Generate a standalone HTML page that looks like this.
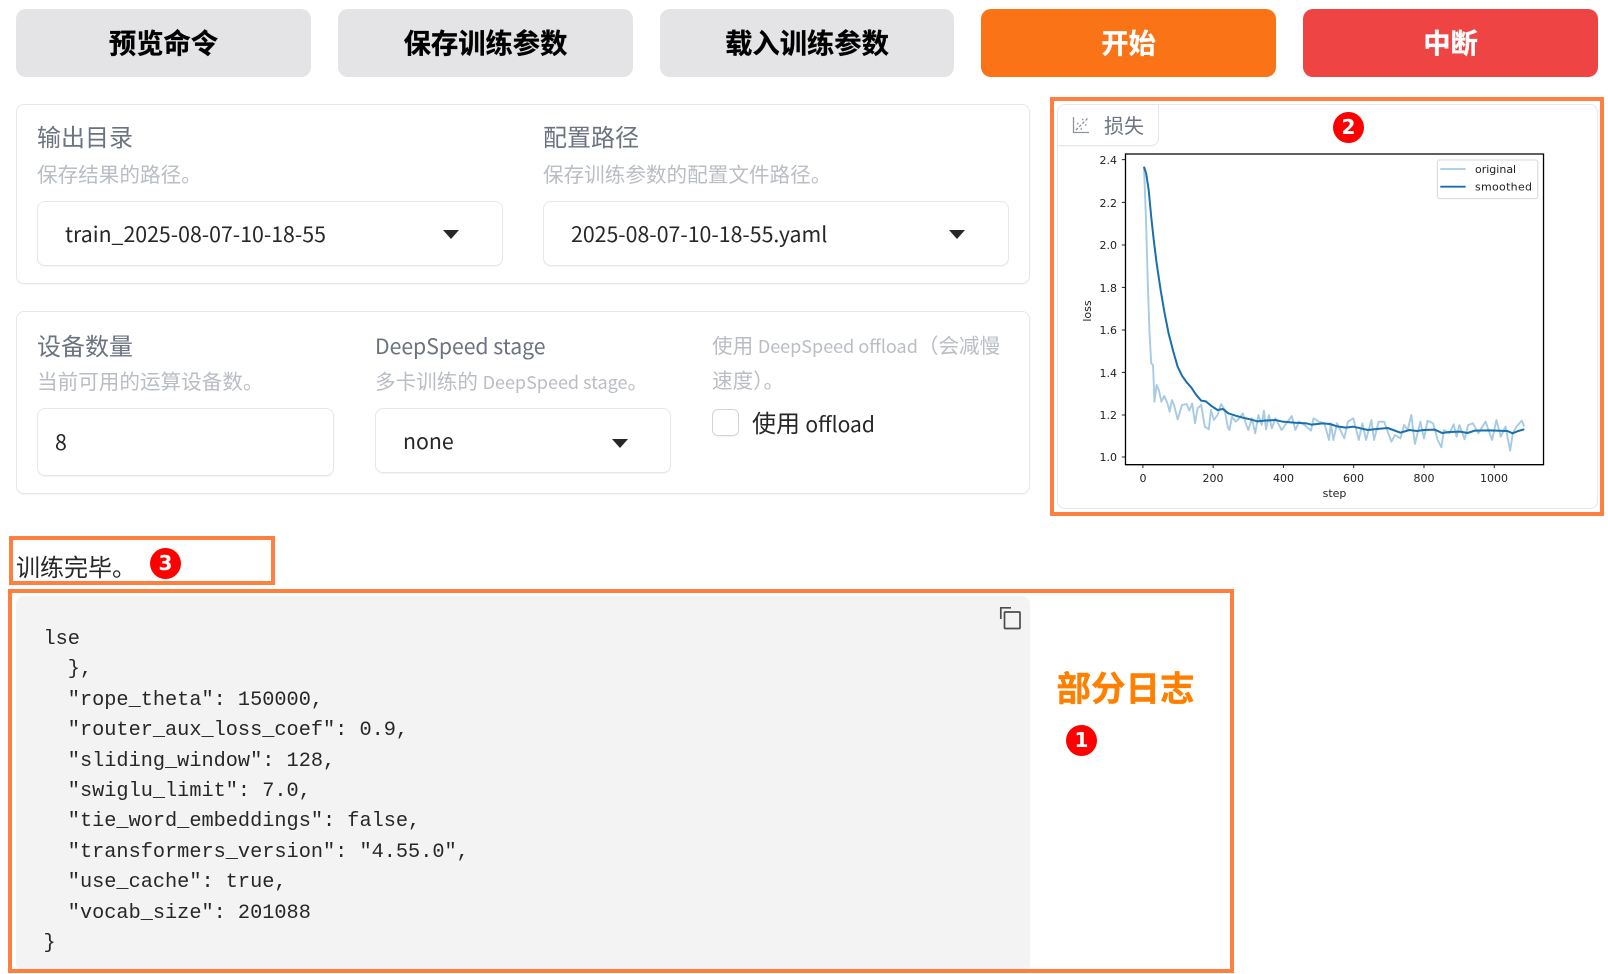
<!DOCTYPE html>
<html lang="zh"><head><meta charset="utf-8"><title>训练</title>
<style>
*{box-sizing:border-box}
html,body{margin:0;padding:0;background:#fff;width:1608px;height:974px;overflow:hidden}
body{position:relative;font-family:"Noto Sans CJK SC","Liberation Sans",sans-serif}
.a{position:absolute;white-space:nowrap}
.btn{position:absolute;top:9px;height:68px;width:295px;border-radius:10px;display:flex;align-items:center;justify-content:center;font-weight:700;font-size:27.3px;color:#000;background:#e4e4e7;padding-bottom:5px;-webkit-text-stroke:.3px currentColor}
.card{position:absolute;border:1px solid #e5e7eb;border-radius:8px;background:#fff;box-shadow:0 1px 1px rgba(0,0,0,.04)}
.box{position:absolute;border:1px solid #e5e7eb;border-radius:8px;background:#fff;box-shadow:0 1px 1px rgba(0,0,0,.05)}
.lab{font-size:24px;line-height:30px;color:#6b7280}
.sub{font-size:20.6px;line-height:28px;color:#b9bdc4}
.sub span{font-size:18px}
.val{font-size:21.3px;line-height:30px;color:#27272a}
.arr{position:absolute;width:0;height:0;border-left:8px solid transparent;border-right:8px solid transparent;border-top:9px solid #27272a}
.org{position:absolute;border:4px solid #ff7f41}
.badge{position:absolute;width:31px;height:31px;border-radius:50%;background:#f00;color:#fff;font:700 20px/31px "DejaVu Sans","Liberation Sans",sans-serif;text-align:center}
pre{position:absolute;left:43.5px;top:625px;margin:0;font:20.25px/30.4px "Liberation Mono",monospace;color:#27272a}
</style></head><body>

<div class="btn" style="left:16px">预览命令</div>
<div class="btn" style="left:338px">保存训练参数</div>
<div class="btn" style="left:660px;width:294px">载入训练参数</div>
<div class="btn" style="left:981px;background:#fb7317;color:#fff">开始</div>
<div class="btn" style="left:1303px;background:#ef4444;color:#fff">中断</div>

<div class="card" style="left:16px;top:104px;width:1014px;height:180px"></div>
<div class="a lab" style="left:37px;top:121px">输出目录</div>
<div class="a sub" style="left:37px;top:159px">保存结果的路径。</div>
<div class="box" style="left:37px;top:201px;width:466px;height:65px"></div>
<div class="a val" style="left:65px;top:219px">train_2025-08-07-10-18-55</div>
<div class="arr" style="left:443px;top:230px"></div>
<div class="a lab" style="left:543px;top:121px">配置路径</div>
<div class="a sub" style="left:543px;top:159px">保存训练参数的配置文件路径。</div>
<div class="box" style="left:543px;top:201px;width:466px;height:65px"></div>
<div class="a val" style="left:571px;top:219px">2025-08-07-10-18-55.yaml</div>
<div class="arr" style="left:949px;top:230px"></div>

<div class="card" style="left:16px;top:311px;width:1014px;height:183px"></div>
<div class="a lab" style="left:37px;top:329.5px">设备数量</div>
<div class="a sub" style="left:37px;top:366px">当前可用的运算设备数。</div>
<div class="box" style="left:37px;top:408px;width:297px;height:68px"></div>
<div class="a val" style="left:55px;top:427px">8</div>
<div class="a lab" style="left:375px;top:331px;font-size:21.2px">DeepSpeed stage</div>
<div class="a sub" style="left:375px;top:366px">多卡训练的 <span>DeepSpeed stage</span>。</div>
<div class="box" style="left:375px;top:408px;width:296px;height:65px"></div>
<div class="a val" style="left:403px;top:426px">none</div>
<div class="arr" style="left:612px;top:439px"></div>
<div class="a sub" style="left:712px;top:328px;line-height:32.500px">使用 <span>DeepSpeed offload</span>（会减慢<br>速度）。</div>
<div class="box" style="left:712px;top:409px;width:27px;height:27px;border-color:#d1d5db;border-radius:6px"></div>
<div class="a val" style="left:752px;top:407px;font-size:24px">使用 <span style="font-size:21px">offload</span></div>

<div class="box" style="left:1057px;top:104px;width:541px;height:405px;box-shadow:none"></div>
<div class="a" style="left:1057px;top:104px;width:102px;height:42px;border:1px solid #e5e7eb;border-width:0 1px 1px 0;border-radius:8px 0 8px 0;box-shadow:0 1px 1px rgba(0,0,0,.03)"></div>
<svg class="a" style="left:1072px;top:116px" width="18" height="18" viewBox="0 0 18 18" fill="none" stroke="#8f949c" stroke-width="1.300"><path d="M1.500 1v15.500H17"/><path d="M4 14L15.500 2.500" stroke-dasharray="2.800 1.700"/><path d="M5 7.500h1.500M10 3.500h1.500M8.500 13h1.500M13 9h1.500" stroke-width="1.500"/></svg>
<div class="a" style="left:1104px;top:110px;font-size:20px;line-height:30px;color:#6b7280">损失</div>

<svg class="a" style="left:1040px;top:90px;filter:blur(.3px)" width="568" height="440" viewBox="0 0 1568 1320" preserveAspectRatio="none">
<rect x="236" y="192" width="1154" height="932" fill="#fff" stroke="#000" stroke-width="1.300" vector-effect="non-scaling-stroke"/>
<path stroke="#222" stroke-width="1" vector-effect="non-scaling-stroke" d="M226 209H236M226 337H236M226 465H236M226 592H236M226 720H236M226 847H236M226 975H236M226 1101H236M284 1124V1134M478 1124V1134M672 1124V1134M866 1124V1134M1060 1124V1134M1254 1124V1134"/>
<polyline fill="none" stroke="#a6cbe3" stroke-width="1.900" vector-effect="non-scaling-stroke" stroke-linejoin="round" points="287,230 293,400 297,560 302,720 307,820 312,825 316,935 322,885 328,900 335,935 343,918 352,940 358,965 364,930 370,945 380,988 392,945 405,942 412,962 420,940 428,1000 435,955 445,945 455,1010 466,1018 472,960 480,990 490,975 500,942 510,960 518,1010 523,1020 530,980 540,995 550,985 560,970 568,1000 575,1020 585,985 594,1030 603,975 612,1005 618,962 624,1018 632,975 640,1015 650,985 667,1020 680,1000 695,978 705,1020 715,995 730,1005 748,1022 755,985 770,995 785,1000 798,1050 803,1000 810,1050 820,1000 840,1045 850,995 865,985 880,1050 890,1000 900,1050 915,990 922,1050 935,995 950,995 970,1055 980,1035 995,1045 1005,1005 1015,1020 1025,975 1035,1062 1050,995 1060,1045 1070,992 1085,1000 1098,1050 1108,1072 1115,1020 1130,1030 1142,1003 1150,1040 1158,1005 1172,1048 1182,1005 1195,1000 1210,1030 1230,995 1248,1050 1260,990 1272,1040 1285,1010 1298,1082 1305,1030 1315,1010 1330,992 1337,1010"/>
<polyline fill="none" stroke="#1a6fad" stroke-width="2" vector-effect="non-scaling-stroke" stroke-linejoin="round" points="287,230 293,250 300,300 307,380 314,450 322,520 333,600 344,670 355,730 368,785 380,830 392,857 405,877 418,893 430,913 445,932 458,934 472,947 490,960 505,957 520,970 540,977 560,983 580,988 600,994 620,992 650,990 670,995 700,998 735,1000 750,1004 780,1000 800,1002 820,1009 845,1013 865,1010 885,1015 905,1020 930,1017 960,1014 975,1020 995,1028 1020,1020 1040,1023 1060,1020 1090,1019 1110,1029 1130,1026 1160,1025 1180,1029 1200,1022 1240,1021 1260,1022 1290,1023 1305,1030 1320,1023 1337,1018"/>
<rect x="1097" y="210" width="277" height="116" rx="6" fill="#fff" fill-opacity=".8" stroke="#d8d8d8" stroke-width="1" vector-effect="non-scaling-stroke"/>
<path d="M1105 237H1175" stroke="#a6cbe3" stroke-width="1.700" vector-effect="non-scaling-stroke"/>
<path d="M1105 290H1175" stroke="#1a6fad" stroke-width="1.800" vector-effect="non-scaling-stroke"/>
</svg>
<svg class="a" style="left:1040px;top:90px;filter:blur(.3px)" width="568" height="440" viewBox="0 0 568 440" font-family="DejaVu Sans,sans-serif" font-size="11" fill="#222">
<g text-anchor="end">
<text x="77" y="74">2.4</text><text x="77" y="117">2.2</text><text x="77" y="159">2.0</text><text x="77" y="202">1.8</text><text x="77" y="244">1.6</text><text x="77" y="287">1.4</text><text x="77" y="329">1.2</text><text x="77" y="371">1.0</text>
</g>
<g text-anchor="middle">
<text x="103" y="392">0</text><text x="173" y="392">200</text><text x="243.500" y="392">400</text><text x="313.500" y="392">600</text><text x="384" y="392">800</text><text x="454" y="392">1000</text>
<text x="294.500" y="407">step</text>
<text transform="translate(51 221) rotate(-90)">loss</text>
</g>
<text x="435" y="83">original</text><text x="435" y="100.500" textLength="57">smoothed</text>
</svg>

<div class="org" style="left:1050px;top:97px;width:554px;height:419px"></div>
<div class="badge" style="left:1333px;top:112px">2</div>

<div class="org" style="left:9px;top:536px;width:266px;height:49px"></div>
<div class="a" style="left:16px;top:550px;font-size:24px;line-height:32px;color:#27272a">训练完毕。</div>
<div class="badge" style="left:150px;top:548px">3</div>

<div class="a" style="left:16px;top:596px;width:1014px;height:376px;background:#f3f3f3;border-radius:8px"></div>
<pre>lse
  },
  "rope_theta": 150000,
  "router_aux_loss_coef": 0.9,
  "sliding_window": 128,
  "swiglu_limit": 7.0,
  "tie_word_embeddings": false,
  "transformers_version": "4.55.0",
  "use_cache": true,
  "vocab_size": 201088
}</pre>
<svg class="a" style="left:998px;top:606px" width="24" height="24" viewBox="0 0 24 24" fill="none" stroke="#4b4b50" stroke-width="1.700"><rect x="6.500" y="6" width="15.500" height="16.500" rx=".8"/><path d="M13 1.800H2.800V13"/></svg>

<div class="org" style="left:8px;top:589px;width:1226px;height:384px"></div>
<div class="a" style="left:1056.500px;top:663px;font-size:34.500px;line-height:46px;font-weight:700;color:#ff8000;-webkit-text-stroke:.4px #ff8000">部分日志</div>
<div class="badge" style="left:1066px;top:724.500px">1</div>
</body></html>
